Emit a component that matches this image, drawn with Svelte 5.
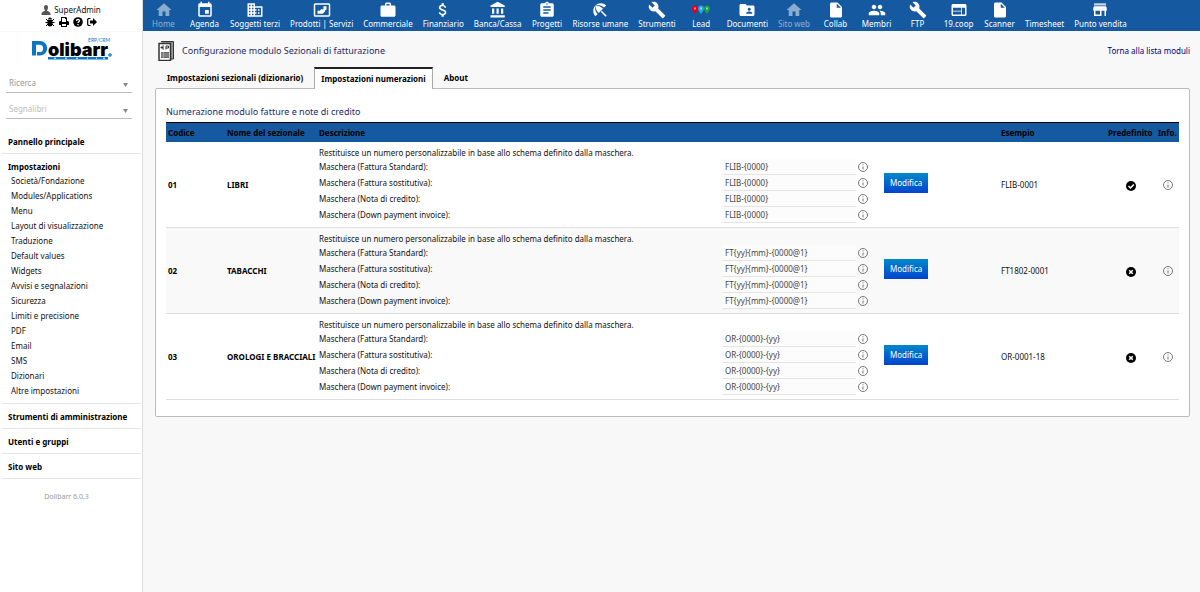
<script>
	const icons = {
		home: 'M10 20v-6h4v6h5v-8h3L12 3 2 12h3v8z',
		agenda: 'M17 12h-5v5h5v-5zM16 1v2H8V1H6v2H5c-1.1 0-2 .9-2 2v14c0 1.1.9 2 2 2h14c1.1 0 2-.9 2-2V5c0-1.1-.9-2-2-2h-1V1h-2zm3 18H5V8h14v11z',
		company: 'M12 7V3H2v18h20V7H12zM6 19H4v-2h2v2zm0-4H4v-2h2v2zm0-4H4V9h2v2zm0-4H4V5h2v2zm4 12H8v-2h2v2zm0-4H8v-2h2v2zm0-4H8V9h2v2zm0-4H8V5h2v2zm10 12h-8v-2h2v-2h-2v-2h2v-2h-2V9h8v10zm-2-8h-2v2h2v-2zm0 4h-2v2h2v-2z',
		product: 'M21 3H3C2 3 1 4 1 5v14c0 1.1.9 2 2 2h18c1 0 2-1 2-2V5c0-1-1-2-2-2zm0 16H3V5h18v14zM6 17v-4h3l2-2h3V7h4v4l-2 2v1l-3 3z',
		briefcase: 'M20 6h-4V4c0-1.11-.89-2-2-2h-4c-1.11 0-2 .89-2 2v2H4c-1.11 0-2 .89-2 2v11c0 1.11.89 2 2 2h16c1.11 0 2-.89 2-2V8c0-1.11-.89-2-2-2zm-6 0h-4V4h4v2z',
		dollar: 'M11.8 10.9c-2.27-.59-3-1.2-3-2.15 0-1.09 1.01-1.85 2.7-1.85 1.78 0 2.44.85 2.5 2.1h2.21c-.07-1.72-1.12-3.3-3.21-3.81V3h-3v2.16c-1.94.42-3.5 1.68-3.5 3.61 0 2.31 1.91 3.46 4.7 4.13 2.5.6 3 1.48 3 2.41 0 .69-.49 1.79-2.7 1.79-2.06 0-2.87-.92-2.98-2.1h-2.2c.12 2.19 1.76 3.42 3.68 3.83V21h3v-2.15c1.95-.37 3.5-1.5 3.5-3.55 0-2.84-2.43-3.81-4.7-4.4z',
		bank: 'M4 10v7h3v-7H4zm6 0v7h3v-7h-3zM2 22h19v-3H2v3zm14-12v7h3v-7h-3zM11.5 1L2 6v2h19V6l-9.5-5z',
		project: 'M19 3h-4.18C14.4 1.84 13.3 1 12 1s-2.4.84-2.82 2H5c-1.1 0-2 .9-2 2v14c0 1.1.9 2 2 2h14c1.1 0 2-.9 2-2V5c0-1.1-.9-2-2-2zm-7 0c.55 0 1 .45 1 1s-.45 1-1 1-1-.45-1-1 .45-1 1-1zm2 14H7v-2h7v2zm3-4H7v-2h10v2zm0-4H7V7h10v2z',
		umbrella: 'M13.13 14.56l1.43-1.43 6.44 6.44L19.57 21zM17.42 8.83l2.86-2.86c-3.95-3.95-10.35-3.96-14.3-.02 3.93-1.3 8.31-.25 11.44 2.88zM5.95 5.98c-3.94 3.95-3.93 10.35.02 14.3l2.86-2.86C5.7 14.29 4.65 9.91 5.95 5.98zM5.97 5.96l-.01.01c-.38 3.01 1.17 6.88 4.3 10.02l5.73-5.73c-3.13-3.13-7.01-4.68-10.02-4.3z',
		wrench: 'M22.7 19l-9.1-9.1c.9-2.3.4-5-1.5-6.9-2-2-5-2.4-7.4-1.3L9 6 6 9 1.6 4.7C.4 7.1.9 10.1 2.9 12.1c1.9 1.9 4.6 2.4 6.9 1.5l9.1 9.1c.4.4 1 .4 1.4 0l2.3-2.3c.5-.4.5-1.1.1-1.4z',
		folder: 'M20 6h-8l-2-2H4c-1.1 0-2 .9-2 2v12c0 1.1.9 2 2 2h16c1.1 0 2-.9 2-2V8c0-1.1-.9-2-2-2zm-5 3c1.1 0 2 .9 2 2s-.9 2-2 2-2-.9-2-2 .9-2 2-2zm4 8h-8v-1c0-1.33 2.67-2 4-2s4 .67 4 2v1z',
		file: 'M6 2c-1.1 0-2 .9-2 2v16c0 1.1.89 2 1.99 2H18c1.1 0 2-.9 2-2V8l-6-6H6zm7 7V3.5L18.5 9H13z',
		people: 'M16 11c1.66 0 2.99-1.34 2.99-3S17.66 5 16 5s-3 1.34-3 3 1.34 3 3 3zm-8 0c1.66 0 2.99-1.34 2.99-3S9.66 5 8 5 5 6.34 5 8s1.34 3 3 3zm0 2c-2.33 0-7 1.17-7 3.5V19h14v-2.5c0-2.33-4.67-3.5-7-3.5zm8 0c-.29 0-.62.02-.97.05 1.16.84 1.97 1.97 1.97 3.45V19h6v-2.5c0-2.33-4.67-3.5-7-3.5z',
		web: 'M20 4H4c-1.1 0-2 .9-2 2v12c0 1.1.9 2 2 2h16c1.1 0 2-.9 2-2V6c0-1.1-.9-2-2-2zm-5 14H4v-4h11v4zm0-5H4V9h11v4zm5 5h-4V9h4v9z',
		store: 'M21 11v-2l-1-2H4l-1 2v4h1v7h10v-7h4v7h2v-7h1zm-9 7H6v-5h6v5z'
	};

	const topMenu = [
		{ label: 'Home', icon: 'home', dim: true },
		{ label: 'Agenda', icon: 'agenda' },
		{ label: 'Soggetti terzi', icon: 'company' },
		{ label: 'Prodotti | Servizi', icon: 'product' },
		{ label: 'Commerciale', icon: 'briefcase' },
		{ label: 'Finanziario', icon: 'dollar' },
		{ label: 'Banca/Cassa', icon: 'bank' },
		{ label: 'Progetti', icon: 'project' },
		{ label: 'Risorse umane', icon: 'umbrella' },
		{ label: 'Strumenti', icon: 'wrench' },
		{ label: 'Lead', icon: 'pins' },
		{ label: 'Documenti', icon: 'folder' },
		{ label: 'Sito web', icon: 'home', dim: true },
		{ label: 'Collab', icon: 'file' },
		{ label: 'Membri', icon: 'people' },
		{ label: 'FTP', icon: 'wrench' },
		{ label: '19.coop', icon: 'web' },
		{ label: 'Scanner', icon: 'file' },
		{ label: 'Timesheet' },
		{ label: 'Punto vendita', icon: 'store' }
	];

	const sideMenu = [
		{ title: 'Pannello principale', items: [] },
		{
			title: 'Impostazioni',
			items: [
				'Società/Fondazione', 'Modules/Applications', 'Menu', 'Layout di visualizzazione', 'Traduzione',
				'Default values', 'Widgets', 'Avvisi e segnalazioni', 'Sicurezza', 'Limiti e precisione',
				'PDF', 'Email', 'SMS', 'Dizionari', 'Altre impostazioni'
			]
		},
		{ title: 'Strumenti di amministrazione', items: [] },
		{ title: 'Utenti e gruppi', items: [] },
		{ title: 'Sito web', items: [] }
	];

	const maskLabels = ['Fattura Standard', 'Fattura sostitutiva', 'Nota di credito', 'Down payment invoice'];

	let rows = $state([
		{ code: '01', name: 'LIBRI', masks: Array(4).fill('FLIB-{0000}'), example: 'FLIB-0001' },
		{ code: '02', name: 'TABACCHI', masks: Array(4).fill('FT{yy}{mm}-{0000@1}'), example: 'FT1802-0001' },
		{ code: '03', name: 'OROLOGI E BRACCIALI', masks: Array(4).fill('OR-{0000}-{yy}'), example: 'OR-0001-18' }
	]);
	let current = $state('01');
</script>

{#snippet info()}
	<svg class="info" viewBox="0 0 12 12">
		<circle cx="6" cy="6" r="4.5" />
		<path d="M6 5.5v3M6 3.3v1" />
	</svg>
{/snippet}

<div class="layout">
	<aside>
		<div class="user">
			<a href="#user" class="login">
				<svg viewBox="0 0 10 10" width="10" height="10" fill="#555"><path d="M5 0C3.5 0 3 1 3 2.5S4 5 4 5.5C4 6.2.5 6.5.5 9v1h9V9C9.5 6.5 6 6.2 6 5.5 6 5 7 4 7 2.5S6.5 0 5 0z" /></svg>
				SuperAdmin
			</a>
			<div class="tools">
				<a href="#bug" aria-label="Bug">
					<svg viewBox="0 0 10 10"><path d="M3 2.5a2 2 0 0 1 4 0zM2.5 3h5v4a2.5 2.5 0 0 1-5 0z" /><path d="M1 2l2 2M9 2L7 4M.5 5.5h9M1 9l2-2M9 9L7 7" stroke="#000" /></svg>
				</a>
				<a href="#print" aria-label="Stampa">
					<svg viewBox="0 0 10 10"><path fill-rule="evenodd" d="M2 0h5l1 1v3h1l1 1v3H8v2H2V8H0V5l1-1h1zM3 1v4h4V2H6V1zM3 7v2h4V7z" /></svg>
				</a>
				<a href="#help" aria-label="Aiuto">
					<svg viewBox="0 0 10 10"><circle cx="5" cy="5" r="4.8" /><path d="M3.5 4c0-2 3-2 3-.3C6.5 4.8 5 4.7 5 6M5 7v1.3" fill="none" stroke="#fff" stroke-width="1.3" /></svg>
				</a>
				<a href="#logout" aria-label="Esci">
					<svg viewBox="0 0 10 10"><path d="M3.5 1.5h-2l-.8.8v5.4l.8.8h2" fill="none" stroke="#000" stroke-width="1.2" /><path d="M3 3.5h3V1l4 4-4 4V6.5H3z" /></svg>
				</a>
			</div>
		</div>

		<a href="#home" class="logo" aria-label="Dolibarr">
			<svg viewBox="0 0 82 24" width="82" height="24">
				<path fill-rule="evenodd" fill="#0a76c4" d="M1 4h8a7.2 7.2 0 0 1 0 14.5H6V15h2.5a3.5 3.5 0 0 0 0-7.2H5v10.7H1z" />
				<path fill="#0a76c4" d="M17 20h60v2.5H17z" />
				<text x="17" y="19" class="word">olibarr</text>
				<text x="57" y="5" class="erp">ERP/CRM</text>
				<path d="M23 21.2h2M34 21.2h2M45 21.2h2M56 21.2h1M65 21.2h1M72 21.2h2" stroke="#fff" />
				<circle cx="79" cy="18" r="1.3" fill="#7fc0ea" stroke="#0a76c4" />
			</svg>
		</a>

		<div class="searches">
			<div class="pick">
				<select aria-label="Ricerca"><option>Ricerca</option></select>
				<svg viewBox="0 0 5 4"><path d="M0 0h5L2.5 4z" /></svg>
			</div>
			<div class="pick">
				<select class="pale" aria-label="Segnalibri"><option>Segnalibri</option></select>
				<svg viewBox="0 0 5 4"><path d="M0 0h5L2.5 4z" /></svg>
			</div>
		</div>

		<nav>
			{#each sideMenu as block}
				<div class="block">
					<a href="#menu" class="title">{block.title}</a>
					{#each block.items as item}
						<a href="#menu" class="item">{item}</a>
					{/each}
				</div>
			{/each}
		</nav>
		<div class="version">Dolibarr 6.0.3</div>
	</aside>

	<div class="page">
		<header>
			{#each topMenu as entry}
				<a href="#top" class:dim={entry.dim}>
					<span class="pic">
						{#if entry.icon === 'pins'}
							<svg viewBox="0 0 18 18">
								<path fill="#e2001a" d="M3 4.5a3 3 0 0 1 3 3C6 9.5 3 13 3 13S0 9.5 0 7.5a3 3 0 0 1 3-3z" />
								<path fill="#2ba3dc" d="M9 4.5a3 3 0 0 1 3 3c0 2-3 5.5-3 5.5S6 9.5 6 7.5a3 3 0 0 1 3-3z" />
								<path fill="#16a34a" d="M15 4.5a3 3 0 0 1 3 3c0 2-3 5.5-3 5.5s-3-3.5-3-5.5a3 3 0 0 1 3-3z" />
								<path d="M2.5 6.5h1v2h-1zM8.5 6.5h1v2h-1zM14.5 6.5h1v2h-1z" />
							</svg>
						{:else if entry.icon}
							<svg viewBox="0 0 24 24">
								<path fill-rule="evenodd" d={icons[entry.icon]} />
								{#if entry.icon === 'store'}
									<path opacity=".75" d="M4 3h16v3H4z" />
								{/if}
							</svg>
						{/if}
					</span>
					{entry.label}
				</a>
			{/each}
		</header>

		<main>
			<div class="heading">
				<svg viewBox="0 0 16 20" width="16" height="20">
					<path d="M3 .5h12.5V18H13" fill="#999" stroke="#333" />
					<path d="M1 2.5h11.5v17H1z" fill="#fff" stroke="#333" stroke-width="1.5" />
					<path d="M6 5H4.5L3 6.5 4.5 8H6M3 6.5h2.5M8 8.5V5h2.5v2H8" fill="none" stroke="#333" />
					<path d="M3 11h8v6H3z" fill="#666" />
					<path d="M3 13h8M3 15h8M5.5 11v6" stroke="#ccc" stroke-width=".5" />
				</svg>
				<h1>Configurazione modulo Sezionali di fatturazione</h1>
				<a href="#modules">Torna alla lista moduli</a>
			</div>

			<div class="tabs">
				<a href="#dict">Impostazioni sezionali (dizionario)</a>
				<a href="#num" class="active">Impostazioni numerazioni</a>
				<a href="#about">About</a>
			</div>

			<section>
				<h2>Numerazione modulo fatture e note di credito</h2>
				<table>
					<thead>
						<tr>
							<th class="code">Codice</th>
							<th class="name">Nome del sezionale</th>
							<th>Descrizione</th>
							<th class="example">Esempio</th>
							<th class="default">Predefinito</th>
							<th class="more">Info.</th>
						</tr>
					</thead>
					<tbody>
						{#each rows as row}
							<tr>
								<td class="strong">{row.code}</td>
								<td class="strong">{row.name}</td>
								<td>
									<div>Restituisce un numero personalizzabile in base allo schema definito dalla maschera.</div>
									<form class="masks" onsubmit={(e) => e.preventDefault()}>
										{#each maskLabels as label, i}
											<label for="mask-{row.code}-{i}">Maschera ({label}):</label>
											<input id="mask-{row.code}-{i}" type="text" bind:value={row.masks[i]} />
											{@render info()}
										{/each}
										<button type="submit" class="edit">Modifica</button>
									</form>
								</td>
								<td>{row.example}</td>
								<td class="center">
									<button class="toggle" aria-label="Predefinito {row.code}" onclick={() => (current = row.code)}>
										<svg viewBox="0 0 10 10">
											<circle cx="5" cy="5" r="5" />
											<path d={current === row.code ? 'M2.5 5l2 2 3.3-3.5' : 'M3.2 3.2l3.6 3.6M6.8 3.2L3.2 6.8'} />
										</svg>
									</button>
								</td>
								<td class="center">{@render info()}</td>
							</tr>
						{/each}
					</tbody>
				</table>
			</section>
		</main>
	</div>
</div>

<style>
	:global(body) {
		background: #f8f8f8;
		color: #111;
		font: 8px/12px "Noto Sans", sans-serif;
	}

	a {
		color: inherit;
		text-decoration: none;
	}

	.layout {
		display: flex;
		min-height: 100vh;
	}

	aside {
		flex: none;
		box-sizing: border-box;
		width: 143px;
		background: #fff;
		border-right: 1px solid #ddd;
	}

	.user {
		display: flex;
		flex-direction: column;
		align-items: center;
		padding: 4px 0 3px;
		border-bottom: 1px solid #f8f8f8;
	}

	.login,
	.tools {
		display: flex;
		align-items: center;
		gap: 3px;
	}

	.tools {
		gap: 4px;
		height: 12px;
	}

	.tools svg {
		display: block;
		width: 10px;
		height: 10px;
	}

	.logo {
		display: block;
		padding: 5px 0 0 31px;
	}

	.logo svg {
		display: block;
	}

	.word {
		font: 900 18px "Inter", sans-serif;
	}

	.erp {
		font: 5px "Lato", sans-serif;
		fill: #0a76c4;
	}

	.searches {
		display: flex;
		flex-direction: column;
		gap: 7px;
		padding: 13px 10px 10px 6px;
	}

	.pick {
		position: relative;
	}

	select {
		appearance: none;
		display: block;
		width: 100%;
		height: 19px;
		padding: 0 3px;
		border: 0;
		border-bottom: 1px solid #bbb;
		border-radius: 0;
		background: #fff;
		color: #999;
		font: inherit;
	}

	.pale {
		color: #bbb;
	}

	.pick svg {
		position: absolute;
		right: 4px;
		top: 9px;
		width: 5px;
		height: 4px;
		fill: #888;
		pointer-events: none;
	}

	.block {
		display: flex;
		flex-direction: column;
		margin: 0 1px 0 2px;
		padding: 7px 6px 5px;
		border-bottom: 1px solid #e4e4e4;
	}

	.title {
		color: #000;
		font-weight: 700;
	}

	.item {
		padding: 0 3px;
		line-height: 15px;
	}

	.version {
		padding: 12px 9px 9px 0;
		color: #999;
		font-size: 7px;
		text-align: center;
	}

	.page {
		flex: 1;
		min-width: 0;
	}

	header {
		display: flex;
		height: 31px;
		background: #1559a0;
		color: #fff;
	}

	header a {
		display: flex;
		flex-direction: column;
		align-items: center;
		box-sizing: border-box;
		min-width: 41px;
		padding: 1px 5px 0;
		white-space: nowrap;
	}

	.pic {
		height: 17px;
	}

	.pic svg {
		display: block;
		width: 18px;
		height: 18px;
		fill: #fff;
	}

	.dim {
		opacity: .5;
	}

	main {
		padding: 8px 10px 0 12px;
	}

	.heading {
		display: flex;
		align-items: center;
		gap: 8px;
		height: 24px;
		padding-left: 3px;
		color: #1a2a6c;
	}

	h1,
	h2 {
		margin: 0;
		font-size: 9px;
		font-weight: 400;
	}

	.heading a {
		margin-left: auto;
		color: #000078;
	}

	.tabs {
		display: flex;
		gap: 11px;
		padding: 4px 12px 0;
		color: #000;
		font-weight: 700;
	}

	.tabs a {
		padding: 5px 0 3px;
	}

	.tabs .active {
		margin-bottom: -1px;
		padding: 4px 6px;
		border: 1px solid #aaa;
		border-top: 2px solid #222;
		border-bottom: 0;
		background: #fff;
	}

	section {
		padding: 17px 10px 16px;
		border: 1px solid #bbb;
		border-radius: 2px;
		background: #fff;
	}

	h2 {
		padding-bottom: 4px;
		color: #1a2a6c;
	}

	table {
		width: 100%;
		border-collapse: collapse;
		table-layout: fixed;
	}

	th {
		height: 19px;
		padding: 0 2px;
		border-top: 1px solid #000;
		background: #1559a0;
		color: #000;
		text-align: left;
		white-space: nowrap;
	}

	.code { width: 55px; }
	.name { width: 88px; }
	.example { width: 103px; }
	.default { width: 46px; }
	.more { width: 19px; }

	tbody tr {
		border-bottom: 1px solid #ddd;
	}

	tbody tr:nth-child(even) {
		background: #f9f9f9;
	}

	td {
		padding: 5px 2px 4px;
		color: #111;
	}

	.strong {
		color: #000;
		font-weight: 700;
		white-space: nowrap;
	}

	.center {
		text-align: center;
	}

	.masks {
		display: grid;
		grid-template-columns: 403fr 134fr 28fr 113fr;
		grid-auto-rows: 16px;
		align-items: center;
	}

	.masks label {
		grid-column: 1;
	}

	input {
		box-sizing: border-box;
		width: 100%;
		height: 16px;
		padding: 0 3px;
		border: 0;
		border-bottom: 1px solid #e4e4e4;
		background: #fcfcfc;
		color: #444;
		font: inherit;
	}

	.info {
		width: 12px;
		height: 12px;
		fill: none;
		stroke: #777;
		vertical-align: middle;
	}

	.masks .info {
		margin-left: 1px;
	}

	.edit {
		grid-row: 1 / span 3;
		grid-column: 4;
		justify-self: start;
		height: 20px;
		padding: 0 6px;
		border: 0;
		background: linear-gradient(#08c, #04c);
		color: #fff;
		font: inherit;
	}

	.toggle {
		padding: 0;
		border: 0;
		background: none;
		vertical-align: middle;
	}

	.toggle svg {
		display: block;
		width: 10px;
		height: 10px;
	}

	.toggle path {
		fill: none;
		stroke: #fff;
		stroke-width: 1.5;
	}
</style>
